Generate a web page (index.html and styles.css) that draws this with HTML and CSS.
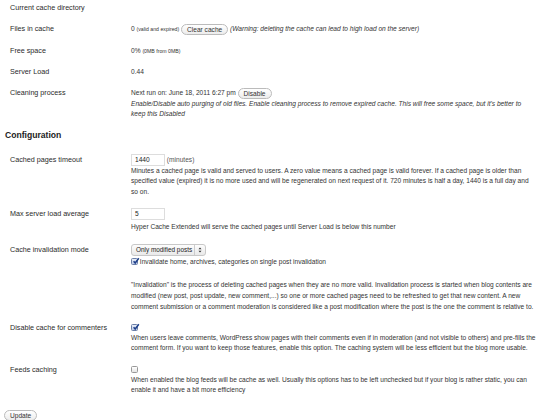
FILE: index.html
```html
<!DOCTYPE html>
<html>
<head>
<meta charset="utf-8">
<link rel="stylesheet" href="styles.css">
</head>
<body>
<div class="page">
  <div class="table">
    <div class="row">
      <div class="label">Current cache directory</div>
      <div class="value"></div>
    </div>
    <div class="row">
      <div class="label">Files in cache</div>
      <div class="value">0 <span class="small">(valid and expired)</span> <span class="btn">Clear cache</span> <em class="warn">(Warning: deleting the cache can lead to high load on the server)</em></div>
    </div>
    <div class="row">
      <div class="label">Free space</div>
      <div class="value">0% <span class="small">(0MB from 0MB)</span></div>
    </div>
    <div class="row">
      <div class="label">Server Load</div>
      <div class="value">0.44</div>
    </div>
    <div class="row">
      <div class="label">Cleaning process</div>
      <div class="value">Next run on: June 18, 2011 6:27 pm <span class="btn">Disable</span>
        <div class="desc italic">Enable/Disable auto purging of old files. Enable cleaning process to remove expired cache. This will free some space, but it's better to<br>keep this Disabled</div>
      </div>
    </div>
  </div>

  <h3 class="heading">Configuration</h3>

  <div class="table">
    <div class="row">
      <div class="label lbl-field">Cached pages timeout</div>
      <div class="value"><span class="input">1440</span> <span class="muted">(minutes)</span>
        <div class="desc">Minutes a cached page is valid and served to users. A zero value means a cached page is valid forever. If a cached page is older than<br>specified value (expired) it is no more used and will be regenerated on next request of it. 720 minutes is half a day, 1440 is a full day and<br>so on.</div>
      </div>
    </div>
    <div class="row">
      <div class="label lbl-field">Max server load average</div>
      <div class="value"><span class="input">5</span>
        <div class="desc after-input">Hyper Cache Extended will serve the cached pages until Server Load is below this number</div>
      </div>
    </div>
    <div class="row">
      <div class="label lbl-field">Cache invalidation mode</div>
      <div class="value"><span class="select">Only modified posts<span class="arrows"><svg width="4" height="6" viewBox="0 0 4 6"><path d="M0.5 2.3 L2 0.6 L3.5 2.3Z M0.5 3.7 L2 5.4 L3.5 3.7Z" fill="#333"/></svg></span></span>
        <div class="check-line"><span class="cb checked"><svg width="8" height="8" viewBox="0 0 8 8"><path d="M1.6 4.2 L3.2 6 L6.8 1.2" fill="none" stroke="#1d3f8a" stroke-width="1.5"/></svg></span> Invalidate home, archives, categories on single post invalidation</div>
        <div class="desc para">"Invalidation" is the process of deleting cached pages when they are no more valid. Invalidation process is started when blog contents are<br>modified (new post, post update, new comment,...) so one or more cached pages need to be refreshed to get that new content. A new<br>comment submission or a comment moderation is considered like a post modification where the post is the one the comment is relative to.</div>
      </div>
    </div>
    <div class="row">
      <div class="label">Disable cache for commenters</div>
      <div class="value"><span class="cb checked"><svg width="8" height="8" viewBox="0 0 8 8"><path d="M1.6 4.2 L3.2 6 L6.8 1.2" fill="none" stroke="#1d3f8a" stroke-width="1.5"/></svg></span>
        <div class="desc">When users leave comments, WordPress show pages with their comments even if in moderation (and not visible to others) and pre-fills the<br>comment form. If you want to keep those features, enable this option. The caching system will be less efficient but the blog more usable.</div>
      </div>
    </div>
    <div class="row">
      <div class="label">Feeds caching</div>
      <div class="value"><span class="cb"></span>
        <div class="desc">When enabled the blog feeds will be cache as well. Usually this options has to be left unchecked but if your blog is rather static, you can<br>enable it and have a bit more efficiency</div>
      </div>
    </div>
  </div>

  <div class="submit"><span class="btn">Update</span></div>
</div>
</body>
</html>
```

FILE: styles.css
```css
html, body {
  margin: 0;
  padding: 0;
  background: #fff;
}
body {
  font-family: "Liberation Sans", Arial, sans-serif;
  color: #333;
  width: 550px;
  height: 420px;
  overflow: hidden;
}
.page {
  padding: 0 0 0 4px;
  margin-top: -3px;
}
.table {
  display: flex;
  flex-direction: column;
}
.row {
  display: grid;
  grid-template-columns: 127px 1fr;
  padding: 5.5px 0;
}
.label {
  padding-left: 6px;
  font-size: 7.2px;
  line-height: 10px;
  color: #2a2a2a;
}
.value {
  font-size: 6.6px;
  line-height: 10px;
  color: #333;
}
.small {
  font-size: 5.2px;
}
.warn {
  font-size: 6.6px;
}
.btn {
  display: inline-block;
  height: 11px;
  line-height: 9px;
  padding: 0 5px;
  border: 1px solid #bbb;
  border-radius: 6px;
  background: linear-gradient(#fff, #ececec);
  font-size: 6.6px;
  color: #333;
  box-sizing: border-box;
  vertical-align: middle;
}
.desc {
  font-size: 6.6px;
  line-height: 10.5px;
  margin-top: 0;
}
.after-input {
  margin-top: 2px;
}
.italic {
  font-style: italic;
}
.heading {
  margin: 4px 0 7px 1px;
  font-size: 8.6px;
  line-height: 12px;
  font-weight: bold;
  color: #222;
}
.lbl-field {
  padding-top: 1px;
}
.input {
  display: inline-block;
  width: 34px;
  height: 12px;
  box-sizing: border-box;
  border: 1px solid #ddd;
  padding: 0 3px;
  font-size: 6.6px;
  line-height: 10px;
  color: #222;
  vertical-align: middle;
  background: #fff;
}
.muted {
  color: #555;
}
.select {
  display: inline-flex;
  align-items: center;
  height: 12px;
  box-sizing: border-box;
  border: 1px solid #c8c8c8;
  border-radius: 3px;
  background: linear-gradient(#fdfdfd, #e9e9e9);
  padding-left: 4px;
  font-size: 6.4px;
  color: #222;
  vertical-align: middle;
}
.arrows {
  display: inline-flex;
  align-items: center;
  justify-content: center;
  width: 10px;
  height: 100%;
  margin-left: 2px;
  border-left: 1px solid #ccc;
}
.check-line {
  margin-top: 1.5px;
  font-size: 6.6px;
  line-height: 10px;
}
.cb {
  display: inline-block;
  width: 7px;
  height: 7px;
  box-sizing: border-box;
  border: 1px solid #999;
  border-radius: 1.5px;
  background: linear-gradient(#fff, #e4e4e4);
  vertical-align: -1px;
  position: relative;
}
.cb.checked {
  background: linear-gradient(#e9eef8, #bccae6);
  border-color: #6b7fa8;
}
.cb svg {
  position: absolute;
  left: -0.5px;
  top: -2px;
}
.para {
  margin-top: 11.5px;
  line-height: 11px;
}
.submit {
  padding: 5px 0 0 0;
}
```
